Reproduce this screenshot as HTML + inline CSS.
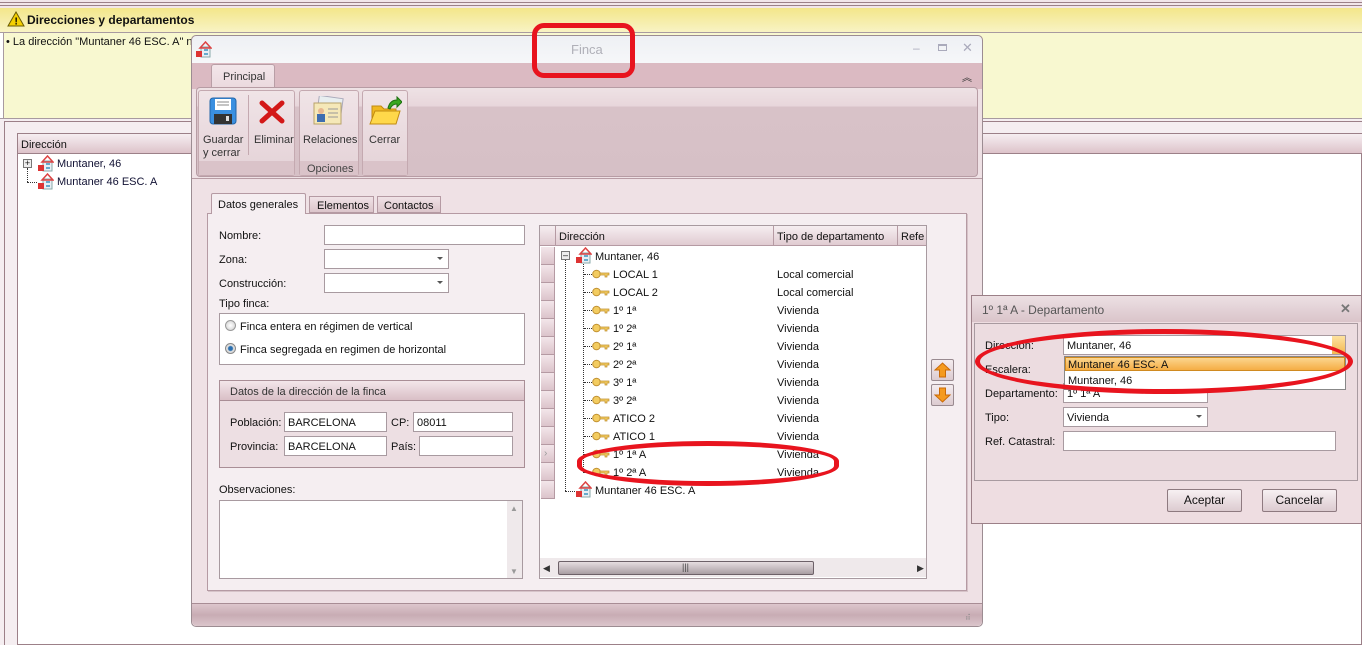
<!DOCTYPE html>
<html><head><meta charset="utf-8"><style>
*{box-sizing:border-box;margin:0;padding:0}
body{width:1362px;height:645px;overflow:hidden;position:relative;background:#fff;font-family:"Liberation Sans",Tahoma,sans-serif;font-size:11px;color:#111}
.a{position:absolute}
.inp{position:absolute;background:#fff;border:1px solid #a89aa0}
.sel::after{content:"";position:absolute;right:5px;top:7px;border-left:3px solid transparent;border-right:3px solid transparent;border-top:3px solid #555}
.t{position:absolute;white-space:nowrap;margin-top:1px}
.red{position:absolute;border:5px solid #e8141e}
.rs{position:absolute;left:541px;width:14px;height:18px;background:linear-gradient(#f3e6ea,#dcc4cb);border-bottom:1px solid #b59aa3;border-right:1px solid #b59aa3}
.btn{position:absolute;background:linear-gradient(#f7f0f2,#dccbd0);border:1px solid #8e7a80;border-radius:2px;text-align:center;line-height:21px;font-size:12px}
</style></head><body>
<div class="a" style="left:0;top:0;width:1362px;height:9px;background:#f2e6ea"></div>
<div class="a" style="left:0;top:2px;width:1362px;height:1px;background:#9c8088"></div>
<div class="a" style="left:0;top:5px;width:1362px;height:1px;background:#9c8088"></div>
<div class="a" style="left:0;top:8px;width:1362px;height:24px;background:linear-gradient(#f3e68a,#f8f3c4)"></div>
<svg class="a" style="left:7px;top:11px" width="18" height="16"><polygon points="9,1 17,15 1,15" fill="#f5d000" stroke="#6a5a00"/><text x="7.5" y="13.5" font-size="10" font-weight="bold" font-family="Liberation Sans">!</text></svg>
<div class="t" style="left:27px;top:12px;font-size:12px;font-weight:bold">Direcciones y departamentos</div>
<div class="a" style="left:0;top:32px;width:1362px;height:1px;background:#a89aa0"></div>
<div class="a" style="left:3px;top:33px;width:1359px;height:85px;background:#f8f8d0;border-left:1px solid #a89aa0"></div>
<div class="t" style="left:6px;top:35px;font-size:11px">• La dirección "Muntaner 46 ESC. A" no</div>
<div class="a" style="left:0;top:118px;width:1362px;height:1px;background:#a89aa0"></div>
<div class="a" style="left:0;top:119px;width:1362px;height:526px;background:#f5eef1"></div>
<div class="a" style="left:4px;top:121px;width:1358px;height:1px;background:#9c8088"></div>
<div class="a" style="left:4px;top:121px;width:1px;height:524px;background:#9c8088"></div>
<div class="a" style="left:17px;top:133px;width:1345px;height:512px;background:#fff;border:1px solid #9c8088"></div>
<div class="a" style="left:18px;top:134px;width:1344px;height:20px;background:linear-gradient(#f6eef1,#ddc3ca);border-bottom:1px solid #9c8088"></div>
<div class="t" style="left:21px;top:138px;font-size:11px">Dirección</div>
<div class="a" style="left:23px;top:159px;width:9px;height:9px;border:1px solid #777;background:#eee;font-size:9px;line-height:7px;text-align:center">+</div>
<div class="a" style="left:27px;top:168px;width:1px;height:14px;border-left:1px dotted #333"></div>
<div class="a" style="left:27px;top:182px;width:10px;border-top:1px dotted #333"></div>
<svg class="a" style="left:37px;top:155px" width="17" height="17"><rect x="6" y="6" width="9" height="10" fill="#e8eef4" stroke="#8aa"/><polygon points="5,7 10.5,1 16,7" fill="none" stroke="#d44" stroke-width="1.5"/><rect x="1" y="10" width="6" height="6" fill="#d33"/><rect x="9" y="8" width="4" height="2" fill="#6ac"/><rect x="9" y="12" width="4" height="2" fill="#6ac"/></svg>
<svg class="a" style="left:37px;top:173px" width="17" height="17"><rect x="6" y="6" width="9" height="10" fill="#e8eef4" stroke="#8aa"/><polygon points="5,7 10.5,1 16,7" fill="none" stroke="#d44" stroke-width="1.5"/><rect x="1" y="10" width="6" height="6" fill="#d33"/><rect x="9" y="8" width="4" height="2" fill="#6ac"/><rect x="9" y="12" width="4" height="2" fill="#6ac"/></svg>
<div class="t" style="left:57px;top:157px;font-size:11px;color:#111133">Muntaner, 46</div>
<div class="t" style="left:57px;top:175px;font-size:11px;color:#111133">Muntaner 46 ESC. A</div>

<div class="a" style="left:191px;top:35px;width:792px;height:592px;background:#efe1e5;border:1px solid #9c8c92;border-radius:5px"></div>
<div class="a" style="left:192px;top:36px;width:790px;height:27px;background:linear-gradient(#eef0f4,#f6f7f9);border-radius:5px 5px 0 0"></div>
<svg class="a" style="left:195px;top:41px" width="17" height="17"><rect x="6" y="6" width="9" height="10" fill="#e8eef4" stroke="#8aa"/><polygon points="5,7 10.5,1 16,7" fill="none" stroke="#d44" stroke-width="1.5"/><rect x="1" y="10" width="6" height="6" fill="#d33"/><rect x="9" y="8" width="4" height="2" fill="#6ac"/><rect x="9" y="12" width="4" height="2" fill="#6ac"/></svg>
<div class="t" style="left:571px;top:41px;font-size:13px;color:#b0b0b8">Finca</div>
<div class="t" style="left:913px;top:40px;font-size:12px;color:#aab">–</div>
<div class="a" style="left:938px;top:44px;width:9px;height:7px;border:1px solid #aab;border-top-width:2px"></div>
<div class="t" style="left:962px;top:39px;font-size:13px;color:#aab">✕</div>
<div class="a" style="left:192px;top:63px;width:790px;height:26px;background:#dbbac2"></div>
<div class="a" style="left:211px;top:64px;width:64px;height:26px;background:linear-gradient(#f3e6ea,#ead8dd);border:1px solid #b99ea6;border-bottom:none;border-radius:3px 3px 0 0"></div>
<div class="t" style="left:223px;top:70px;font-size:11px;color:#333">Principal</div>
<div class="t" style="left:962px;top:68px;font-size:10px;color:#333">︽</div>
<div class="a" style="left:196px;top:87px;width:782px;height:90px;background:linear-gradient(#eee2e5 0,#e8d6db 18px,#d8c2c8 19px,#d6c0c6 100%);border:1px solid #b79ca4;border-radius:4px"></div>
<div class="a" style="left:198px;top:90px;width:97px;height:86px;border:1px solid #c4a9b0;border-radius:3px;background:linear-gradient(#f0e4e7,#e4d2d7)"></div>
<div class="a" style="left:299px;top:90px;width:60px;height:86px;border:1px solid #c4a9b0;border-radius:3px;background:linear-gradient(#f0e4e7,#e4d2d7)"></div>
<div class="a" style="left:362px;top:90px;width:46px;height:86px;border:1px solid #c4a9b0;border-radius:3px;background:linear-gradient(#f0e4e7,#e4d2d7)"></div>
<div class="a" style="left:199px;top:161px;width:95px;height:14px;background:#dac3c9"></div>
<div class="a" style="left:300px;top:161px;width:58px;height:14px;background:#dac3c9"></div>
<div class="a" style="left:363px;top:161px;width:44px;height:14px;background:#dac3c9"></div>
<div class="a" style="left:248px;top:95px;width:1px;height:60px;background:#c4a9b0"></div>
<svg class="a" style="left:209px;top:97px" width="28" height="28"><rect x="1" y="1" width="26" height="26" rx="3" fill="#3a8fe0" stroke="#2466a8"/><rect x="6" y="2" width="16" height="11" fill="#fff"/><line x1="8" y1="5" x2="20" y2="5" stroke="#888"/><line x1="8" y1="8" x2="20" y2="8" stroke="#888"/><rect x="5" y="17" width="18" height="10" fill="#333"/><rect x="17" y="19" width="3" height="5" fill="#ddd"/></svg>
<svg class="a" style="left:259px;top:98px" width="26" height="26"><path d="M3 5 L23 23 M23 5 L3 23" stroke="#d31818" stroke-width="5" stroke-linecap="round"/></svg>
<svg class="a" style="left:311px;top:96px" width="34" height="32"><rect x="7" y="1" width="24" height="18" fill="#e8eef0" stroke="#aab" transform="rotate(8 19 10)"/><rect x="3" y="7" width="27" height="21" fill="#f5e8b8" stroke="#b9a36a"/><circle cx="10" cy="15" r="3" fill="#e8b890"/><rect x="6" y="18" width="8" height="8" fill="#3d6db0"/><line x1="17" y1="13" x2="27" y2="13" stroke="#999"/><line x1="17" y1="17" x2="27" y2="17" stroke="#999"/><line x1="17" y1="21" x2="27" y2="21" stroke="#999"/></svg>
<svg class="a" style="left:368px;top:96px" width="34" height="32"><path d="M4 10 h9 l3 3 h12 v14 h-24z" fill="#f0b820" stroke="#c08a10"/><path d="M2 28 l5 -13 h25 l-4 13z" fill="#ffd84a" stroke="#c08a10"/><path d="M20 12 q2 -8 9 -8 v-3 l5 5 -5 5 v-3 q-5 0 -7 5z" fill="#38a820" stroke="#1e7010"/></svg>
<div class="t" style="left:203px;top:133px;font-size:11px;color:#333;line-height:13px">Guardar<br>y cerrar</div>
<div class="t" style="left:254px;top:133px;font-size:11px;color:#333">Eliminar</div>
<div class="t" style="left:303px;top:133px;font-size:11px;color:#333">Relaciones</div>
<div class="t" style="left:369px;top:133px;font-size:11px;color:#333">Cerrar</div>
<div class="t" style="left:307px;top:162px;font-size:11px;color:#444">Opciones</div>
<div class="a" style="left:192px;top:178px;width:790px;height:1px;background:#b79ca4"></div>

<div class="a" style="left:207px;top:213px;width:760px;height:378px;background:#f5eef1;border:1px solid #b59aa3;box-shadow:1px 1px 0 #d6c3c8"></div>
<div class="a" style="left:211px;top:193px;width:95px;height:21px;background:#f5eef1;border:1px solid #b59aa3;border-bottom:none;border-radius:2px 2px 0 0"></div>
<div class="t" style="left:218px;top:198px;font-size:11px">Datos generales</div>
<div class="a" style="left:309px;top:196px;width:65px;height:17px;background:linear-gradient(#f0e2e6,#dcc5cb);border:1px solid #b59aa3"></div>
<div class="t" style="left:317px;top:199px;font-size:11px">Elementos</div>
<div class="a" style="left:377px;top:196px;width:64px;height:17px;background:linear-gradient(#f0e2e6,#dcc5cb);border:1px solid #b59aa3"></div>
<div class="t" style="left:384px;top:199px;font-size:11px">Contactos</div>

<div class="t" style="left:219px;top:229px">Nombre:</div>
<div class="inp" style="left:324px;top:225px;width:201px;height:20px"></div>
<div class="t" style="left:219px;top:253px">Zona:</div>
<div class="inp sel" style="left:324px;top:249px;width:125px;height:20px"></div>
<div class="t" style="left:219px;top:277px">Construcción:</div>
<div class="inp sel" style="left:324px;top:273px;width:125px;height:20px"></div>
<div class="t" style="left:219px;top:297px">Tipo finca:</div>
<div class="inp" style="left:219px;top:313px;width:306px;height:52px"></div>
<div class="a" style="left:225px;top:320px;width:11px;height:11px;border-radius:50%;border:1px solid #999;background:radial-gradient(#fff,#ccc)"></div>
<div class="t" style="left:240px;top:320px">Finca entera en régimen de vertical</div>
<div class="a" style="left:225px;top:343px;width:11px;height:11px;border-radius:50%;border:1px solid #888;background:radial-gradient(#2a6fb0 0,#2a6fb0 2px,#ddd 3px)"></div>
<div class="t" style="left:240px;top:343px">Finca segregada en regimen de horizontal</div>
<div class="a" style="left:219px;top:380px;width:306px;height:88px;border:1px solid #a98e96;background:#eddfe3"></div>
<div class="a" style="left:220px;top:381px;width:304px;height:20px;background:linear-gradient(#f3e6ea,#d9bfc6);border-bottom:1px solid #a98e96"></div>
<div class="t" style="left:230px;top:385px;color:#333">Datos de la dirección de la finca</div>
<div class="t" style="left:230px;top:416px">Población:</div>
<div class="inp" style="left:284px;top:412px;width:103px;height:20px;padding:4px 3px 0">BARCELONA</div>
<div class="t" style="left:391px;top:416px">CP:</div>
<div class="inp" style="left:413px;top:412px;width:100px;height:20px;padding:4px 3px 0">08011</div>
<div class="t" style="left:230px;top:440px">Provincia:</div>
<div class="inp" style="left:284px;top:436px;width:103px;height:20px;padding:4px 3px 0">BARCELONA</div>
<div class="t" style="left:391px;top:440px">País:</div>
<div class="inp" style="left:419px;top:436px;width:94px;height:20px"></div>
<div class="t" style="left:219px;top:483px">Observaciones:</div>
<div class="inp" style="left:219px;top:500px;width:304px;height:79px"></div>
<div class="a" style="left:507px;top:501px;width:15px;height:77px;background:#efe9eb"></div>
<div class="t" style="left:510px;top:503px;font-size:8px;color:#999">▲</div>
<div class="t" style="left:510px;top:566px;font-size:8px;color:#999">▼</div>

<div class="a" style="left:539px;top:225px;width:388px;height:354px;background:#fff;border:1px solid #a89aa0"></div>
<div class="a" style="left:540px;top:226px;width:386px;height:20px;background:linear-gradient(#f6eef1,#e0cbd1);border-bottom:1px solid #b59aa3"></div>
<div class="a" style="left:555px;top:226px;width:1px;height:20px;background:#b59aa3"></div>
<div class="a" style="left:773px;top:226px;width:1px;height:20px;background:#b59aa3"></div>
<div class="a" style="left:897px;top:226px;width:1px;height:20px;background:#b59aa3"></div>
<div class="t" style="left:559px;top:230px">Dirección</div>
<div class="t" style="left:777px;top:230px">Tipo de departamento</div>
<div class="t" style="left:901px;top:230px">Refe</div>
<div class="rs" style="top:247px"></div><div class="rs" style="top:265px"></div><div class="rs" style="top:283px"></div><div class="rs" style="top:301px"></div><div class="rs" style="top:319px"></div><div class="rs" style="top:337px"></div><div class="rs" style="top:355px"></div><div class="rs" style="top:373px"></div><div class="rs" style="top:391px"></div><div class="rs" style="top:409px"></div><div class="rs" style="top:427px"></div><div class="rs" style="top:445px"></div><div class="rs" style="top:463px"></div><div class="rs" style="top:481px"></div>
<div class="t" style="left:544px;top:447px;font-size:10px;color:#999">›</div>
<div class="a" style="left:561px;top:251px;width:9px;height:9px;border:1px solid #777;background:#eee;font-size:9px;line-height:6px;text-align:center">–</div>
<div class="a" style="left:565px;top:260px;height:231px;border-left:1px dotted #333"></div>
<div class="a" style="left:565px;top:491px;width:10px;border-top:1px dotted #333"></div>
<div class="a" style="left:583px;top:264px;height:209px;border-left:1px dotted #333"></div>
<svg class="a" style="left:575px;top:247px" width="17" height="17"><rect x="6" y="6" width="9" height="10" fill="#e8eef4" stroke="#8aa"/><polygon points="5,7 10.5,1 16,7" fill="none" stroke="#d44" stroke-width="1.5"/><rect x="1" y="10" width="6" height="6" fill="#d33"/><rect x="9" y="8" width="4" height="2" fill="#6ac"/><rect x="9" y="12" width="4" height="2" fill="#6ac"/></svg>
<svg class="a" style="left:575px;top:481px" width="17" height="17"><rect x="6" y="6" width="9" height="10" fill="#e8eef4" stroke="#8aa"/><polygon points="5,7 10.5,1 16,7" fill="none" stroke="#d44" stroke-width="1.5"/><rect x="1" y="10" width="6" height="6" fill="#d33"/><rect x="9" y="8" width="4" height="2" fill="#6ac"/><rect x="9" y="12" width="4" height="2" fill="#6ac"/></svg>
<div class="t" style="left:595px;top:250px">Muntaner, 46</div>
<div class="t" style="left:595px;top:484px">Muntaner 46 ESC. A</div>
<div id="rows"></div>
<div class="a" style="left:540px;top:558px;width:386px;height:19px;background:#efe9eb"></div>
<div class="a" style="left:558px;top:561px;width:256px;height:14px;border:1px solid #6d6168;border-radius:2px;background:linear-gradient(#e6dde0,#a99ea3)"></div>
<div class="t" style="left:682px;top:561px;font-size:9px;color:#444">|||</div>
<div class="t" style="left:543px;top:562px;font-size:9px;color:#333">◀</div>
<div class="t" style="left:917px;top:562px;font-size:9px;color:#333">▶</div>
<div class="a" style="left:931px;top:359px;width:23px;height:22px;border:1px solid #998a90;border-radius:2px;background:linear-gradient(#f4ecef,#dccbd0)"></div>
<div class="a" style="left:931px;top:384px;width:23px;height:22px;border:1px solid #998a90;border-radius:2px;background:linear-gradient(#f4ecef,#dccbd0)"></div>
<svg class="a" style="left:934px;top:362px" width="17" height="16"><path d="M8.5 1 L16 8 H11.5 V15 H5.5 V8 H1z" fill="#f59a1e" stroke="#c96a08"/></svg>
<svg class="a" style="left:934px;top:387px" width="17" height="16"><path d="M8.5 15 L16 8 H11.5 V1 H5.5 V8 H1z" fill="#f59a1e" stroke="#c96a08"/></svg>

<div class="a" style="left:192px;top:603px;width:790px;height:1px;background:#a88d95"></div>
<div class="a" style="left:192px;top:604px;width:790px;height:22px;background:linear-gradient(#ddc6cc,#c8acb4 50%,#dbc5cb);border-radius:0 0 5px 5px"></div>
<div class="t" style="left:965px;top:610px;font-size:8px;color:#888">⣴</div>

<div class="a" style="left:971px;top:295px;width:391px;height:229px;background:#eedde1;border:1px solid #9c8088"></div>
<div class="a" style="left:972px;top:296px;width:389px;height:26px;background:linear-gradient(#ece0e3,#dac4ca)"></div>
<div class="t" style="left:982px;top:302px;font-size:12px;color:#555">1º 1ª A - Departamento</div>
<div class="t" style="left:1340px;top:300px;font-size:13px;color:#777;font-weight:bold">✕</div>
<div class="a" style="left:974px;top:323px;width:384px;height:158px;border:1px solid #a89aa0;background:#ecdce0"></div>
<div class="t" style="left:985px;top:339px">Dirección:</div>
<div class="inp" style="left:1063px;top:335px;width:283px;height:20px;padding:4px 3px 0">Muntaner, 46</div>
<div class="a" style="left:1332px;top:336px;width:13px;height:18px;background:linear-gradient(#fde2a0,#f4b850)"></div>
<div class="t" style="left:985px;top:363px">Escalera:</div>
<div class="t" style="left:985px;top:387px">Departamento:</div>
<div class="inp" style="left:1063px;top:383px;width:145px;height:20px;padding:4px 3px 0">1º 1ª A</div>
<div class="inp" style="left:1064px;top:356px;width:282px;height:34px;border-color:#888"></div>
<div class="a" style="left:1065px;top:357px;width:280px;height:14px;background:linear-gradient(#fcd58e,#f5ad45);border:1px solid #d08a20"></div>
<div class="t" style="left:1068px;top:358px">Muntaner 46 ESC. A</div>
<div class="t" style="left:1068px;top:374px">Muntaner, 46</div>
<div class="t" style="left:985px;top:411px">Tipo:</div>
<div class="inp sel" style="left:1063px;top:407px;width:145px;height:20px;padding:4px 3px 0">Vivienda</div>
<div class="t" style="left:985px;top:435px">Ref. Catastral:</div>
<div class="inp" style="left:1063px;top:431px;width:273px;height:20px"></div>
<div class="btn" style="left:1167px;top:489px;width:75px;height:23px">Aceptar</div>
<div class="btn" style="left:1262px;top:489px;width:75px;height:23px">Cancelar</div>

<div class="red" style="left:532px;top:23px;width:103px;height:55px;border-radius:12px"></div>
<div class="red" style="left:577px;top:441px;width:262px;height:45px;border-radius:50%/45%"></div>
<div class="red" style="left:975px;top:329px;width:378px;height:65px;border-radius:50%/50%"></div>

<script>
var r=[["LOCAL 1","Local comercial"],["LOCAL 2","Local comercial"],["1º 1ª","Vivienda"],["1º 2ª","Vivienda"],["2º 1ª","Vivienda"],["2º 2ª","Vivienda"],["3º 1ª","Vivienda"],["3º 2ª","Vivienda"],["ATICO 2","Vivienda"],["ATICO 1","Vivienda"],["1º 1ª A","Vivienda"],["1º 2ª A","Vivienda"]];
var h="";
r.forEach(function(x,i){var y=265+i*18;
h+='<div class="a" style="left:584px;top:'+(y+9)+'px;width:8px;border-top:1px dotted #333"></div>';
h+='<svg class="a" style="left:592px;top:'+(y+4)+'px" width="18" height="10"><circle cx="4.5" cy="5" r="3.8" fill="#f3cc60" stroke="#c09030"/><path d="M8 4 H17 V6 H15 V8 H13 V6 H8z" fill="#f3cc60" stroke="#c09030" stroke-width=".7"/></svg>';
h+='<div class="t" style="left:613px;top:'+(y+3)+'px">'+x[0]+'</div><div class="t" style="left:777px;top:'+(y+3)+'px">'+x[1]+'</div>';});
document.getElementById("rows").innerHTML=h;
</script>
</body></html>
